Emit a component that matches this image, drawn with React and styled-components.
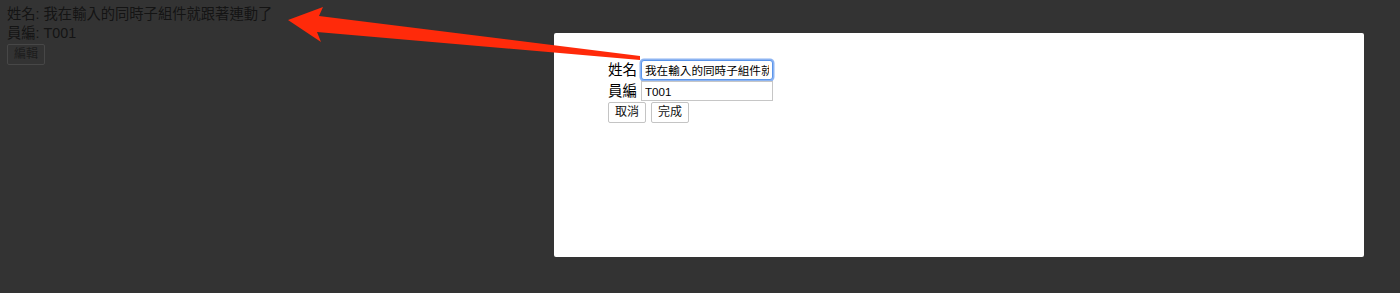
import styled, { createGlobalStyle } from 'styled-components'

const Global = createGlobalStyle`
  html, body {
    margin: 0;
    background: #333333;
  }
  body {
    font-family: "Liberation Sans", "Noto Sans CJK TC", sans-serif;
  }
`

let Page = styled.div`
  position: relative;
  width: 1400px;
  height: 293px;
  padding: 5px 7px;
  box-sizing: border-box;
  color: #141414;
  font-size: 14.3px;
`

let Line = styled.div`
  line-height: 19px;
  height: 19px;
  white-space: nowrap;
`

let DimButton = styled.button`
  margin-top: 1px;
  font-family: "Liberation Sans", "Noto Sans CJK TC", sans-serif;
  font-size: 12px;
  line-height: 15px;
  padding: 2px 6px;
  background: #333333;
  color: #1c1c1c;
  border: 1px solid #474747;
  border-radius: 2px;
`

let Modal = styled.div`
  position: absolute;
  left: 554px;
  top: 33px;
  width: 810px;
  height: 224px;
  background: #ffffff;
  border-radius: 2px;
  box-sizing: border-box;
  padding: 27px 0 0 54px;
  color: #000;
`

let Row = styled.div`
  display: flex;
  align-items: center;
  gap: 4px;
  height: 20px;
  margin-bottom: ${props => props.gap || 0}px;
`

let Label = styled.label`
  font-size: 14.5px;
  line-height: 20px;
  white-space: nowrap;
  flex-shrink: 0;
`

let Field = styled.input`
  width: 132px;
  height: 20px;
  box-sizing: border-box;
  font-family: "Liberation Sans", "Noto Sans CJK TC", sans-serif;
  font-size: 11.6px;
  padding: 1px 3px;
  border: 1px solid ${props => props.focused ? '#5b95ea' : '#c6c6c6'};
  border-radius: ${props => props.focused ? '3px' : '0'};
  box-shadow: ${props => props.focused ? '0 0 0 1.5px #8db4f2' : 'none'};
  outline: none;
  color: #000;
  background: #fff;
`

let Actions = styled.div`
  display: flex;
  gap: 5px;
  margin-top: 1px;
`

let Btn = styled.button`
  font-family: "Liberation Sans", "Noto Sans CJK TC", sans-serif;
  font-size: 12px;
  line-height: 15px;
  padding: 2px 6px;
  background: #fff;
  color: #111;
  border: 1px solid #c4c4c4;
  border-radius: 2px;
`

let Arrow = styled.svg`
  position: absolute;
  left: 0;
  top: 0;
  pointer-events: none;
`

function App() {
  return (
    <>
      <Global />
      <Page>
        <Line>姓名: 我在輸入的同時子組件就跟著連動了</Line>
        <Line>員編: T001</Line>
        <DimButton>編輯</DimButton>

        <Modal>
          <Row gap={1}>
            <Label>姓名</Label>
            <Field focused defaultValue="我在輸入的同時子組件就跟著連動了" />
          </Row>
          <Row>
            <Label>員編</Label>
            <Field defaultValue="T001" />
          </Row>
          <Actions>
            <Btn>取消</Btn>
            <Btn>完成</Btn>
          </Actions>
        </Modal>

        <Arrow width="1400" height="293" viewBox="0 0 1400 293">
          <polygon
            points="288,20 323,7 319,16 640,56 640,60 317,32 321,42"
            fill="#ff2a0a"
          />
        </Arrow>
      </Page>
    </>
  )
}

export default App
